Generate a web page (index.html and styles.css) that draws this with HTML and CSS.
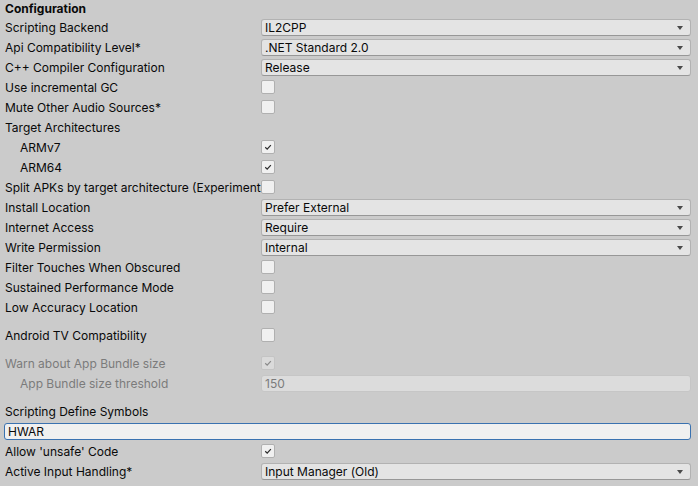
FILE: index.html
```html
<!DOCTYPE html>
<html lang="en">
<head>
    <meta charset="UTF-8">
    <title>Player Settings - Configuration</title>
    <link rel="stylesheet" href="styles.css">
</head>
<body>
    <div class="panel">
        <div class="header">Configuration</div>

        <div class="row">
            <span class="label">Scripting Backend</span>
            <div class="popup">IL2CPP</div>
        </div>
        <div class="row">
            <span class="label">Api Compatibility Level*</span>
            <div class="popup">.NET Standard 2.0</div>
        </div>
        <div class="row">
            <span class="label">C++ Compiler Configuration</span>
            <div class="popup">Release</div>
        </div>
        <div class="row">
            <span class="label">Use incremental GC</span>
            <div class="toggle"></div>
        </div>
        <div class="row">
            <span class="label">Mute Other Audio Sources*</span>
            <div class="toggle"></div>
        </div>
        <div class="row">
            <span class="label">Target Architectures</span>
        </div>
        <div class="row">
            <span class="label indent">ARMv7</span>
            <div class="toggle checked"><svg viewBox="0 0 13 13"><path d="M3.5 6.8 L5.6 8.8 L9.6 4.4"/></svg></div>
        </div>
        <div class="row">
            <span class="label indent">ARM64</span>
            <div class="toggle checked"><svg viewBox="0 0 13 13"><path d="M3.5 6.8 L5.6 8.8 L9.6 4.4"/></svg></div>
        </div>
        <div class="row">
            <span class="label">Split APKs by target architecture (Experimental)</span>
            <div class="toggle"></div>
        </div>
        <div class="row">
            <span class="label">Install Location</span>
            <div class="popup">Prefer External</div>
        </div>
        <div class="row">
            <span class="label">Internet Access</span>
            <div class="popup">Require</div>
        </div>
        <div class="row">
            <span class="label">Write Permission</span>
            <div class="popup">Internal</div>
        </div>
        <div class="row">
            <span class="label">Filter Touches When Obscured</span>
            <div class="toggle"></div>
        </div>
        <div class="row">
            <span class="label">Sustained Performance Mode</span>
            <div class="toggle"></div>
        </div>
        <div class="row">
            <span class="label">Low Accuracy Location</span>
            <div class="toggle"></div>
        </div>

        <div class="row spaced">
            <span class="label">Android TV Compatibility</span>
            <div class="toggle"></div>
        </div>

        <div class="row spaced disabled">
            <span class="label">Warn about App Bundle size</span>
            <div class="toggle checked"><svg viewBox="0 0 13 13"><path d="M3.5 6.8 L5.6 8.8 L9.6 4.4"/></svg></div>
        </div>
        <div class="row disabled">
            <span class="label indent">App Bundle size threshold</span>
            <div class="field">150</div>
        </div>

        <div class="row spaced">
            <span class="label">Scripting Define Symbols</span>
        </div>
        <div class="row">
            <div class="field wide focused">HWAR</div>
        </div>
        <div class="row">
            <span class="label">Allow 'unsafe' Code</span>
            <div class="toggle checked"><svg viewBox="0 0 13 13"><path d="M3.5 6.8 L5.6 8.8 L9.6 4.4"/></svg></div>
        </div>
        <div class="row">
            <span class="label">Active Input Handling*</span>
            <div class="popup">Input Manager (Old)</div>
        </div>
    </div>
</body>
</html>
```

FILE: styles.css
```css
body {
    margin: 0;
    background: #cbcbcb;
    font-family: Inter, 'Noto Sans', sans-serif;
    font-size: 12px;
    color: #090909;
}

.panel {
    padding: 0 7px 0 5px;
}

.header {
    height: 17px;
    line-height: 18px;
    font-weight: bold;
}

.row {
    display: flex;
    align-items: center;
    height: 20px;
}

.row.spaced {
    margin-top: 8px;
}

.label {
    width: 256px;
    flex-shrink: 0;
    white-space: nowrap;
    overflow: hidden;
}

.label.indent {
    padding-left: 15px;
    box-sizing: border-box;
}

.popup {
    flex: 1;
    position: relative;
    height: 17px;
    line-height: 15px;
    box-sizing: border-box;
    padding: 0 20px 0 3px;
    background: #e4e4e4;
    border: 1px solid #b2b2b2;
    border-bottom-color: #979797;
    border-radius: 3px;
}

.popup::after {
    content: '';
    position: absolute;
    right: 7px;
    top: 6px;
    border-left: 3.5px solid transparent;
    border-right: 3.5px solid transparent;
    border-top: 4px solid #4a4a4a;
}

.toggle {
    width: 14px;
    height: 14px;
    box-sizing: border-box;
    background: #f0f0f0;
    border: 1px solid #b0b0b0;
    border-radius: 2px;
}

.toggle svg {
    display: block;
    width: 12px;
    height: 12px;
}

.toggle path {
    fill: none;
    stroke: #2c2c2c;
    stroke-width: 1.3;
}

.field {
    flex: 1;
    height: 17px;
    line-height: 15px;
    box-sizing: border-box;
    padding: 0 3px;
    background: #e2e2e2;
    border: 1px solid #bdbdbd;
    border-radius: 3px;
}

.field.wide {
    margin-left: -1px;
}

.field.focused {
    background: #f0f0f0;
    border-color: #3a72b0;
}

.disabled {
    color: #7b7b7b;
}

.disabled .toggle {
    background: #dadada;
    border-color: #c4c4c4;
}

.disabled .toggle path {
    stroke: #8a8a8a;
}

.disabled .field {
    background: #dcdcdc;
    border-color: #c6c6c6;
}
```
